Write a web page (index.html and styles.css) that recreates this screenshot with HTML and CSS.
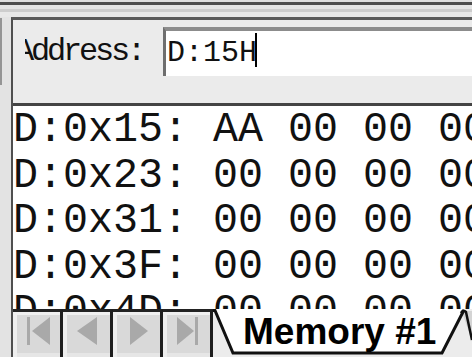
FILE: index.html
```html
<!DOCTYPE html>
<html>
<head>
<meta charset="utf-8">
<link rel="stylesheet" href="styles.css">
</head>
<body>
<div class="window">
  <div class="topstrip"></div>
  <div class="body">
    <div class="gutter"></div>
    <div class="main">
      <div class="addr-row">
        <div class="label-clip"><span class="label">Address:</span></div>
        <div class="input"><span class="val">D:15H</span><span class="caret"></span></div>
      </div>
      <div class="memory">
        <div class="row">D:0x15: AA 00 00 00 00 00 00 00 00 00 00 00 00 00</div>
        <div class="row">D:0x23: 00 00 00 00 00 00 00 00 00 00 00 00 00 00</div>
        <div class="row">D:0x31: 00 00 00 00 00 00 00 00 00 00 00 00 00 00</div>
        <div class="row">D:0x3F: 00 00 00 00 00 00 00 00 00 00 00 00 00 00</div>
        <div class="row">D:0x4D: 00 00 00 00 00 00 00 00 00 00 00 00 00 00</div>
      </div>
      <div class="tabbar">
        <div class="navbtn"><svg width="47" height="45" viewBox="0 0 47 45"><rect x="14" y="5" width="3" height="28" class="glyph"/><polygon points="19,19 37,5 37,33" class="glyph"/></svg></div>
        <div class="navbtn"><svg width="47" height="45" viewBox="0 0 47 45"><polygon points="14,19 34,5 34,33" class="glyph"/></svg></div>
        <div class="navbtn"><svg width="47" height="45" viewBox="0 0 47 45"><polygon points="17,5 17,33 35,19" class="glyph"/></svg></div>
        <div class="navbtn"><svg width="47" height="45" viewBox="0 0 47 45"><polygon points="14,5 14,33 31,19" class="glyph"/><rect x="32" y="5" width="3" height="28" class="glyph"/></svg></div>
        <div class="tabarea">
          <svg class="tabshape" width="259" height="48" viewBox="0 0 259 48">
            <polygon points="2,0 251,0 229,44 20,44" fill="#ffffff"/>
            <path d="M249,3 Q251,1 253,2 L259,2 L259,32 Z" fill="#d4d4d4"/>
            <path d="M248,4 Q250,0 253,3 L259,31" fill="none" stroke="#111" stroke-width="2.5"/>
            <polyline points="0,1.5 2,1.5 20,44 229,44 251,1" fill="none" stroke="#111" stroke-width="3"/>
          </svg>
          <span class="tab-label">Memory #1</span>
        </div>
      </div>
    </div>
  </div>
</div>
</body>
</html>
```
FILE: styles.css
```css
html, body {
  margin: 0;
  padding: 0;
  width: 472px;
  height: 357px;
  overflow: hidden;
  background: #e6e6e6;
}

.window {
  width: 472px;
  height: 357px;
  display: flex;
  flex-direction: column;
}

.topstrip {
  height: 17px;
  flex: none;
  background: linear-gradient(to bottom,
    #dedede 0, #dedede 2px,
    #4d4d4d 2px, #4d4d4d 5px,
    #e4e4e4 5px, #e4e4e4 9px,
    #cdcdcd 9px, #cdcdcd 12px,
    #e8e8e8 12px, #e8e8e8 17px);
}

.body {
  flex: 1;
  display: flex;
  min-height: 0;
}

.gutter {
  width: 11px;
  flex: none;
  background: linear-gradient(#959595, #959595) no-repeat 0 1px / 2px 67px, #e3e3e3;
}

.main {
  flex: 1;
  min-width: 0;
  display: flex;
  flex-direction: column;
  border-left: 2px solid #4f4f4f;
  border-top: 3px solid #5a5a5a;
  background: #ebebeb;
}

.addr-row {
  height: 83px;
  flex: none;
  display: flex;
  align-items: flex-start;
}

.label-clip {
  flex: none;
  width: 138px;
  margin-left: 12px;
  margin-top: 13.5px;
  overflow: hidden;
}

.label {
  display: block;
  margin-left: -10px;
  font: 32px/36px "Liberation Mono", monospace;
  letter-spacing: -3.2px;
  white-space: nowrap;
  color: #111;
}

.input {
  flex: 1;
  min-width: 0;
  margin-top: 7px;
  height: 45px;
  border-top: 4px solid #8c8c8c;
  border-left: 3px solid #6e6e6e;
  background: #ffffff;
  padding-left: 1px;
  font: 30px/45px "Liberation Mono", monospace;
  white-space: nowrap;
  color: #111;
}

.caret {
  display: inline-block;
  width: 2px;
  height: 34px;
  background: #000;
  margin-left: -2px;
  vertical-align: -5.5px;
}

.memory {
  flex: 1;
  min-height: 0;
  overflow: hidden;
  background: #ffffff;
  border-top: 3px solid #444444;
  padding-top: 2px;
  font: 41.67px/45.5px "Liberation Mono", monospace;
  color: #111;
}

.row {
  white-space: pre;
}

.tabbar {
  height: 48px;
  flex: none;
  display: flex;
  background: #ececec;
}

.navbtn {
  flex: none;
  width: 47px;
  height: 45px;
  border-top: 3px solid #222;
  border-right: 3px solid #1e1e1e;
  background: #d9d9d9;
  box-shadow: inset 4px 3px 0 #efefef, inset 0 -4px 0 #e6e6e6;
}

.navbtn svg {
  display: block;
}

.glyph {
  fill: #a9a9a9;
}

.tabarea {
  flex: 1;
  position: relative;
  padding-left: 30px;
  overflow: hidden;
}

.tabshape {
  position: absolute;
  left: 0;
  top: 0;
}

.tab-label {
  position: relative;
  display: block;
  font: bold 37px/46px "Liberation Sans", Arial, sans-serif;
  color: #000;
  white-space: nowrap;
}
```
